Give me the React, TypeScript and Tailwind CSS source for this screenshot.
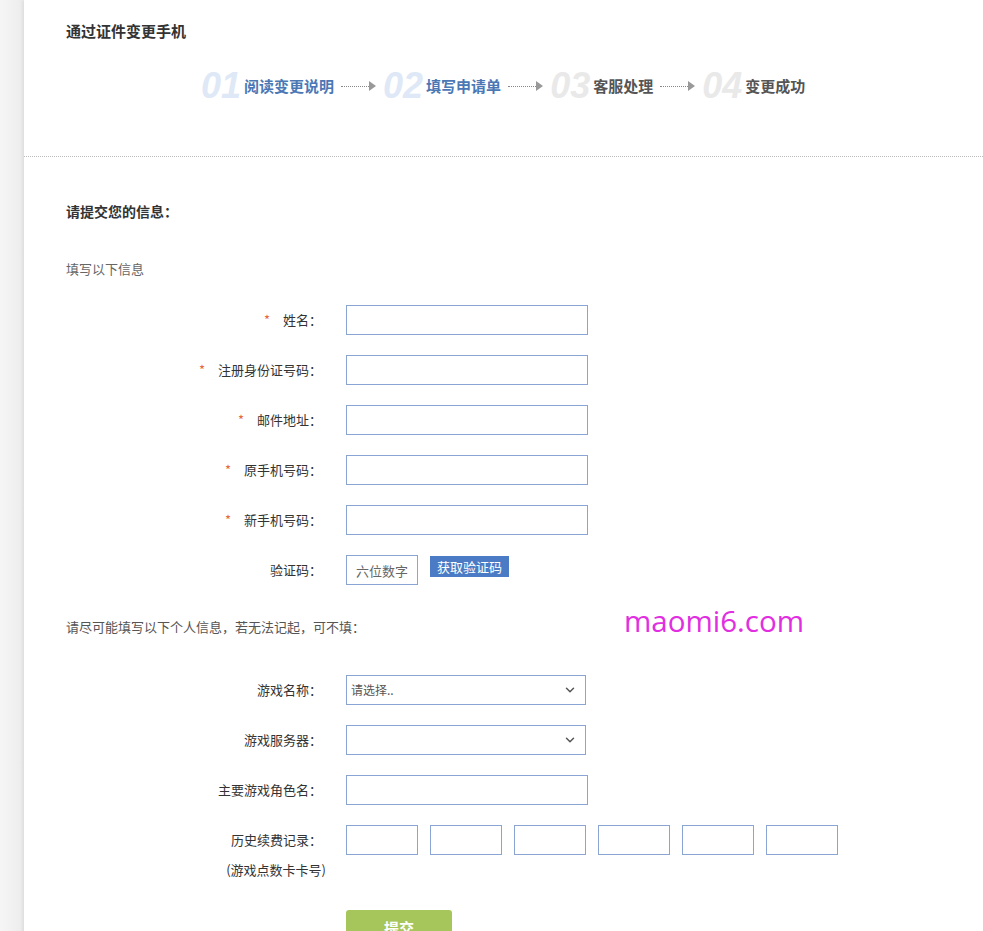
import { ChevronDown } from 'lucide-react';

const FONT = '"Microsoft YaHei", "Noto Sans CJK SC", "Noto Sans", sans-serif';

type Step = { num: string; label: string; active: boolean };

const steps: Step[] = [
  { num: '01', label: '阅读变更说明', active: true },
  { num: '02', label: '填写申请单', active: true },
  { num: '03', label: '客服处理', active: false },
  { num: '04', label: '变更成功', active: false },
];

function Arrow() {
  return (
    <div className="flex items-center mx-[7px]">
      <div className="w-[28px] border-t border-dotted border-[#888]" />
      <div className="w-0 h-0 border-y-[5px] border-y-transparent border-l-[7px] border-l-[#999]" />
    </div>
  );
}

function Label({ text, required, sub }: { text: string; required?: boolean; sub?: string }) {
  return (
    <div className="w-[256px] shrink-0 text-right text-[13px] text-[#333]">
      <div className="h-[30px] flex items-center justify-end">
        {required && <span className="text-[#e4683c] mr-[13px]">*</span>}
        <span>{text}</span>
      </div>
      {sub && <div className="mt-[1px] leading-[28px] -mr-[4px]">{sub}</div>}
    </div>
  );
}

function TextInput({ w = 'w-[242px]' }: { w?: string }) {
  return <input className={`${w} h-[30px] border border-[#8aa5d3] bg-white outline-none px-2 text-[13px]`} />;
}

function SelectBox({ placeholder }: { placeholder?: string }) {
  return (
    <div className="w-[240px] h-[30px] border border-[#8aa5d3] bg-white flex items-center justify-between pl-[4px] pr-[8px]">
      <span className="text-[12px] text-[#555]">{placeholder ?? ''}</span>
      <ChevronDown className="w-[14px] h-[14px] text-[#555]" strokeWidth={2.5} />
    </div>
  );
}

function Row({ children }: { children: React.ReactNode }) {
  return <div className="flex items-start">{children}</div>;
}

export default function App() {
  return (
    <div className="flex min-h-[1000px] bg-white" style={{ fontFamily: FONT }}>
      {/* left gutter */}
      <div className="w-[24px] shrink-0 bg-gradient-to-r from-[#f6f6f6] to-[#ececec]" />

      <div className="flex-1 bg-white shadow-[-2px_0_3px_rgba(0,0,0,0.06)]">
        {/* header */}
        <div className="pl-[42px] pt-[21px] pb-[50px] border-b border-dotted border-[#bbb]">
          <h1 className="text-[15px] leading-[20px] font-bold text-[#333]">通过证件变更手机</h1>
          <div className="mt-[25px] h-[40px] flex items-center pl-[135px]">
            {steps.map((s, i) => (
              <div key={s.num} className="flex items-center">
                <span
                  className={`text-[36px] leading-none font-bold italic mr-[3px] ${s.active ? 'text-[#dee8f6]' : 'text-[#e9e9e9]'}`}
                  style={{ fontFamily: '"Liberation Sans", Arial, sans-serif' }}
                >
                  {s.num}
                </span>
                <span className={`text-[15px] font-bold ${s.active ? 'text-[#4b78b5]' : 'text-[#555]'}`}>{s.label}</span>
                {i < steps.length - 1 && <Arrow />}
              </div>
            ))}
          </div>
        </div>

        {/* form */}
        <div className="pl-[42px] pt-[44px] pb-[40px]">
          <h2 className="text-[14px] leading-[20px] font-bold text-[#333]">请提交您的信息：</h2>
          <p className="mt-[38px] text-[13px] leading-[20px] text-[#666]">填写以下信息</p>

          <div className="mt-[26px] flex flex-col gap-[20px]">
            <Row>
              <Label text="姓名：" required />
              <div className="ml-[24px]"><TextInput /></div>
            </Row>
            <Row>
              <Label text="注册身份证号码：" required />
              <div className="ml-[24px]"><TextInput /></div>
            </Row>
            <Row>
              <Label text="邮件地址：" required />
              <div className="ml-[24px]"><TextInput /></div>
            </Row>
            <Row>
              <Label text="原手机号码：" required />
              <div className="ml-[24px]"><TextInput /></div>
            </Row>
            <Row>
              <Label text="新手机号码：" required />
              <div className="ml-[24px]"><TextInput /></div>
            </Row>
            <Row>
              <Label text="验证码：" />
              <div className="ml-[24px] flex items-start gap-[12px]">
                <input
                  placeholder="六位数字"
                  className="w-[72px] h-[30px] border border-[#8aa5d3] text-center text-[13px] placeholder:text-[#666] outline-none"
                />
                <button className="mt-[1px] h-[21px] px-[7px] bg-[#4a7bc4] text-white text-[13px] leading-[21px]">获取验证码</button>
              </div>
            </Row>
          </div>

          <div className="mt-[32px] flex items-center h-[20px]">
            <p className="text-[13px] leading-[20px] text-[#555] w-[558px]">请尽可能填写以下个人信息，若无法记起，可不填：</p>
            <span className="-mt-[12px] text-[29.5px] leading-none text-[#e12ee0]" style={{ fontFamily: '"Open Sans", "Noto Sans", sans-serif' }}>
              maomi6.com
            </span>
          </div>

          <div className="mt-[38px] flex flex-col gap-[20px]">
            <Row>
              <Label text="游戏名称：" />
              <div className="ml-[24px]"><SelectBox placeholder="请选择.." /></div>
            </Row>
            <Row>
              <Label text="游戏服务器：" />
              <div className="ml-[24px]"><SelectBox /></div>
            </Row>
            <Row>
              <Label text="主要游戏角色名：" />
              <div className="ml-[24px]"><TextInput /></div>
            </Row>
            <Row>
              <Label text="历史续费记录：" sub="(游戏点数卡卡号)" />
              <div className="ml-[24px] flex gap-[12px]">
                {[0, 1, 2, 3, 4, 5].map(n => (
                  <TextInput key={n} w="w-[72px]" />
                ))}
              </div>
            </Row>
          </div>

          <div className="mt-[26px] ml-[280px]">
            <button className="w-[106px] h-[36px] rounded-[3px] bg-[#a6c65b] text-white text-[15px] font-bold">提交</button>
          </div>
        </div>
      </div>
    </div>
  );
}
